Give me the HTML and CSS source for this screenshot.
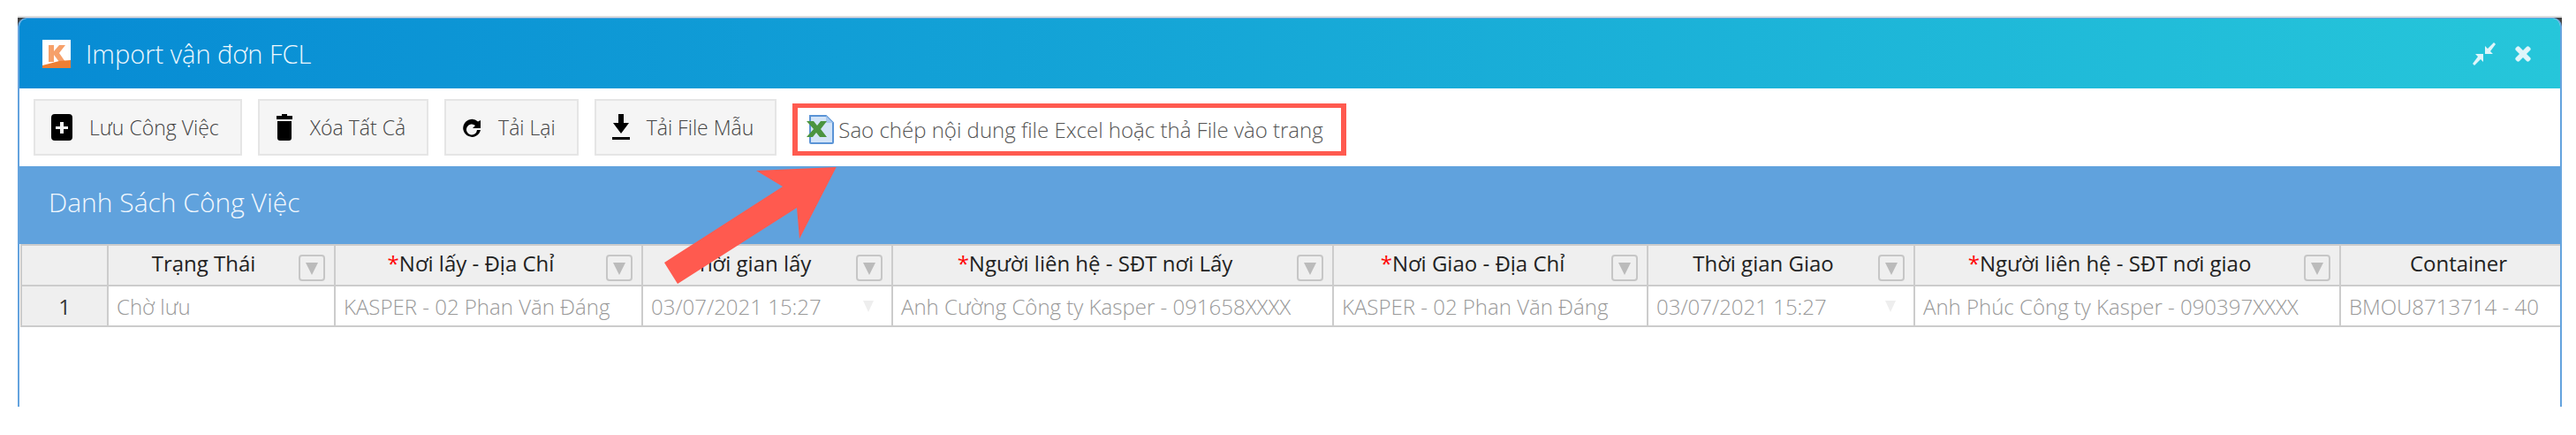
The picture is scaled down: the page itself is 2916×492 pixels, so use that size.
FILE: index.html
```html
<!DOCTYPE html>
<html>
<head>
	<meta charset="UTF-8">
	<title>Import vận đơn FCL</title>
	<link rel="stylesheet" href="styles.css">
</head>
<body>
<div class="shell">
	<div class="window">
		<div class="title-bar">
			<svg class="logo" viewBox="0 0 32 32">
				<rect width="32" height="32" fill="#fff"/>
				<path d="M7 6h6v7l6-7h7l-7 9 7 10h-7l-6-8v8H7z" fill="#f6a06a"/>
				<path d="M0 29l19-5 13-1v9H0z" fill="#ee7f33"/>
			</svg>
			<span class="title-text">Import vận đơn FCL</span>
			<div class="win-icons">
				<svg class="ico-compress" viewBox="0 0 28 28">
					<path d="M27 3l-2-2-7 7-3-3v9h9l-3-3zM1 25l2 2 7-7 3 3v-9H4l3 3z" fill="#dff5fa"/>
				</svg>
				<svg class="ico-close" viewBox="0 0 22 22">
					<path d="M3 7l4 4-4 4c-1 1-1 2 0 3l1 1c1 1 2 1 3 0l4-4 4 4c1 1 2 1 3 0l1-1c1-1 1-2 0-3l-4-4 4-4c1-1 1-2 0-3l-1-1c-1-1-2-1-3 0l-4 4-4-4c-1-1-2-1-3 0l-1 1c-1 1-1 2 0 3z" fill="#dff5fa"/>
				</svg>
			</div>
		</div>

		<div class="toolbar">
			<button class="btn">
				<svg class="btn-icon" viewBox="0 0 24 30"><path d="M4 0h16a4 4 0 0 1 4 4v22a4 4 0 0 1-4 4H4a4 4 0 0 1-4-4V4a4 4 0 0 1 4-4zm6 9v5H5v3h5v5h4v-5h5v-3h-5V9z" fill-rule="evenodd"/></svg>
				Lưu Công Việc
			</button>
			<button class="btn">
				<svg class="btn-icon" viewBox="0 0 20 30"><path d="M7 0h6v2h6v4H1V2h6zM2 8h16v19a3 3 0 0 1-3 3H5a3 3 0 0 1-3-3z"/></svg>
				Xóa Tất Cả
			</button>
			<button class="btn">
				<svg class="btn-icon" viewBox="0 0 22 30"><path d="M18 8.500A10 10 0 1 0 21 18h-4a6 6 0 1 1-2-5l-3 3h9V7z"/></svg>
				Tải Lại
			</button>
			<button class="btn">
				<svg class="btn-icon" viewBox="0 0 20 30"><path d="M7 0h6v10h6l-9 12-9-12h6zM0 26h20v3H0z"/></svg>
				Tải File Mẫu
			</button>
			<div class="drop-hint">
				<svg class="excel" viewBox="0 0 33 33">
					<path d="M5 1h18l8 8v22a1 1 0 0 1-1 1H6a1 1 0 0 1-1-1z" fill="#d3e4f8" stroke="#5b94d6" stroke-width="2"/>
					<path d="M23 1v8h8z" fill="#a9c8ee"/>
					<path d="M1 7h8l4 5 4-5h7l-7 9 7 9h-8l-4-5-4 5H1l8-9z" fill="#4b9440"/>
				</svg>
				Sao chép nội dung file Excel hoặc thả File vào trang
			</div>
		</div>

		<div class="panel-head">Danh Sách Công Việc</div>

		<div class="grid-wrap">
			<table class="grid">
				<colgroup>
					<col class="c-num"><col class="c-status"><col class="c-from"><col class="c-time1"><col class="c-person1"><col class="c-to"><col class="c-time2"><col class="c-person2"><col class="c-cont">
				</colgroup>
				<thead>
					<tr>
						<th></th>
						<th><div class="th-in"><span class="th-label">Trạng Thái</span><span class="filter"></span></div></th>
						<th><div class="th-in"><span class="th-label"><i>*</i>Nơi lấy - Địa Chỉ</span><span class="filter"></span></div></th>
						<th><div class="th-in"><span class="th-label">Thời gian lấy</span><span class="filter"></span></div></th>
						<th><div class="th-in"><span class="th-label"><i>*</i>Người liên hệ - SĐT nơi Lấy</span><span class="filter"></span></div></th>
						<th><div class="th-in"><span class="th-label"><i>*</i>Nơi Giao - Địa Chỉ</span><span class="filter"></span></div></th>
						<th><div class="th-in"><span class="th-label">Thời gian Giao</span><span class="filter"></span></div></th>
						<th><div class="th-in"><span class="th-label"><i>*</i>Người liên hệ - SĐT nơi giao</span><span class="filter"></span></div></th>
						<th><div class="th-in"><span class="th-label">Container</span></div></th>
					</tr>
				</thead>
				<tbody>
					<tr>
						<td class="row-num">1</td>
						<td>Chờ lưu</td>
						<td>KASPER - 02 Phan Văn Đáng</td>
						<td><div class="date-in">03/07/2021 15:27<span class="date-arrow"></span></div></td>
						<td>Anh Cường Công ty Kasper - 091658XXXX</td>
						<td>KASPER - 02 Phan Văn Đáng</td>
						<td><div class="date-in">03/07/2021 15:27<span class="date-arrow"></span></div></td>
						<td>Anh Phúc Công ty Kasper - 090397XXXX</td>
						<td>BMOU8713714 - 40</td>
					</tr>
				</tbody>
			</table>
		</div>
	</div>

	<svg class="arrow" viewBox="0 0 200 135">
		<path d="M195.700 1L105 5l30 18L1 109l15 24 135-86 3 35z" fill="#ff5a4f"/>
	</svg>
</div>
</body>
</html>
```

FILE: styles.css
```css
body {
	margin: 0;
	background: #fff;
	font-family: "Open Sans", "Liberation Sans", sans-serif;
}

.shell {
	position: relative;
	width: 2880px;
	height: 442px;
	margin: 18px 0 0 20px;
	border-top: 2px solid #ddd;
	box-sizing: border-box;
	background: linear-gradient(#444, #444) no-repeat;
	background-size: 100% 12px;
}

.window {
	height: 440px;
	box-sizing: border-box;
	background: #fff;
	border: 2px solid #64a3de;
	border-width: 1px 2px 0;
	border-radius: 10px 10px 0 0;
	overflow: hidden;
}

.title-bar {
	display: flex;
	align-items: center;
	height: 79px;
	padding: 0 31px 0 26px;
	background: linear-gradient(to right, #078bd4, #26c6da);
}

.logo {
	width: 32px;
	height: 32px;
	margin-top: 1px;
}

.title-text {
	margin-left: 17px;
	font-size: 29px;
	font-weight: 300;
	color: #eef8fd;
}

.win-icons {
	display: flex;
	align-items: center;
	gap: 19px;
	margin-left: auto;
}

.ico-compress {
	width: 28px;
	height: 28px;
}

.ico-close {
	width: 22px;
	height: 22px;
}

.toolbar {
	display: flex;
	align-items: flex-start;
	gap: 18px;
	height: 88px;
	box-sizing: border-box;
	padding: 12px 0 0 16px;
}

.btn {
	display: flex;
	align-items: center;
	height: 64px;
	padding: 0 24px 0 18px;
	background: #f5f5f5;
	border: 2px solid #e5e5e5;
	font-family: inherit;
	font-size: 23px;
	font-weight: 300;
	color: #444;
}

.btn-icon {
	height: 30px;
	width: auto;
	margin-right: 19px;
}

.drop-hint {
	display: flex;
	align-items: center;
	height: 59px;
	margin-top: 5px;
	box-sizing: border-box;
	padding: 0 20px 0 9px;
	border: 5px solid #ff5a4f;
	border-width: 5px 6px;
	font-size: 24px;
	font-weight: 300;
	color: #555;
}

.excel {
	width: 33px;
	height: 33px;
	margin-right: 4px;
}

.panel-head {
	height: 88px;
	box-sizing: border-box;
	padding: 20px 0 0 33px;
	background: #60a2dd;
	font-size: 30px;
	font-weight: 300;
	color: #f2f8fd;
}

.grid-wrap {
	padding-left: 1px;
	overflow: hidden;
}

.grid {
	table-layout: fixed;
	width: 2895px;
	border-collapse: separate;
	border-spacing: 0;
	border-top: 2px solid #ccc;
	font-size: 24px;
}

.c-num { width: 100px; }
.c-status { width: 257px; }
.c-from { width: 348px; }
.c-time1 { width: 283px; }
.c-person1 { width: 499px; }
.c-to { width: 356px; }
.c-time2 { width: 302px; }
.c-person2 { width: 482px; }
.c-cont { width: 268px; }

.grid th,
.grid td {
	height: 44px;
	padding: 0;
	border-right: 2px solid #ccc;
	border-bottom: 2px solid #ccc;
	box-sizing: content-box;
	white-space: nowrap;
	overflow: hidden;
}

.grid th:first-child,
.grid td:first-child {
	border-left: 2px solid #ccc;
}

.grid th {
	background: #efefef;
	font-weight: 400;
	color: #222;
}

.th-in {
	display: flex;
	align-items: flex-start;
	height: 44px;
}

.th-label {
	flex: 1;
	text-align: center;
	line-height: 40px;
}

.th-label i {
	font-style: normal;
	color: #f00;
}

.filter {
	position: relative;
	flex: none;
	width: 26px;
	height: 26px;
	margin: 10px 10px 0 0;
	border: 2px solid #c6c6c6;
	border-radius: 4px;
}

.filter::after {
	content: "";
	position: absolute;
	left: 6px;
	top: 7px;
	border: 7px solid transparent;
	border-top: 14px solid #bbb;
	border-bottom: 0;
}

.grid td {
	padding-left: 9px;
	font-weight: 300;
	color: #999;
	background: #fff;
}

.grid td.row-num {
	padding-left: 0;
	background: #efefef;
	text-align: center;
	font-weight: 400;
	color: #333;
}

.date-in {
	display: flex;
	align-items: center;
	justify-content: space-between;
	padding-right: 20px;
}

.date-arrow {
	border: 6px solid transparent;
	border-top: 13px solid #eee;
	border-bottom: 0;
}

.arrow {
	position: absolute;
	left: 731px;
	top: 168px;
	width: 200px;
	height: 135px;
}
```
